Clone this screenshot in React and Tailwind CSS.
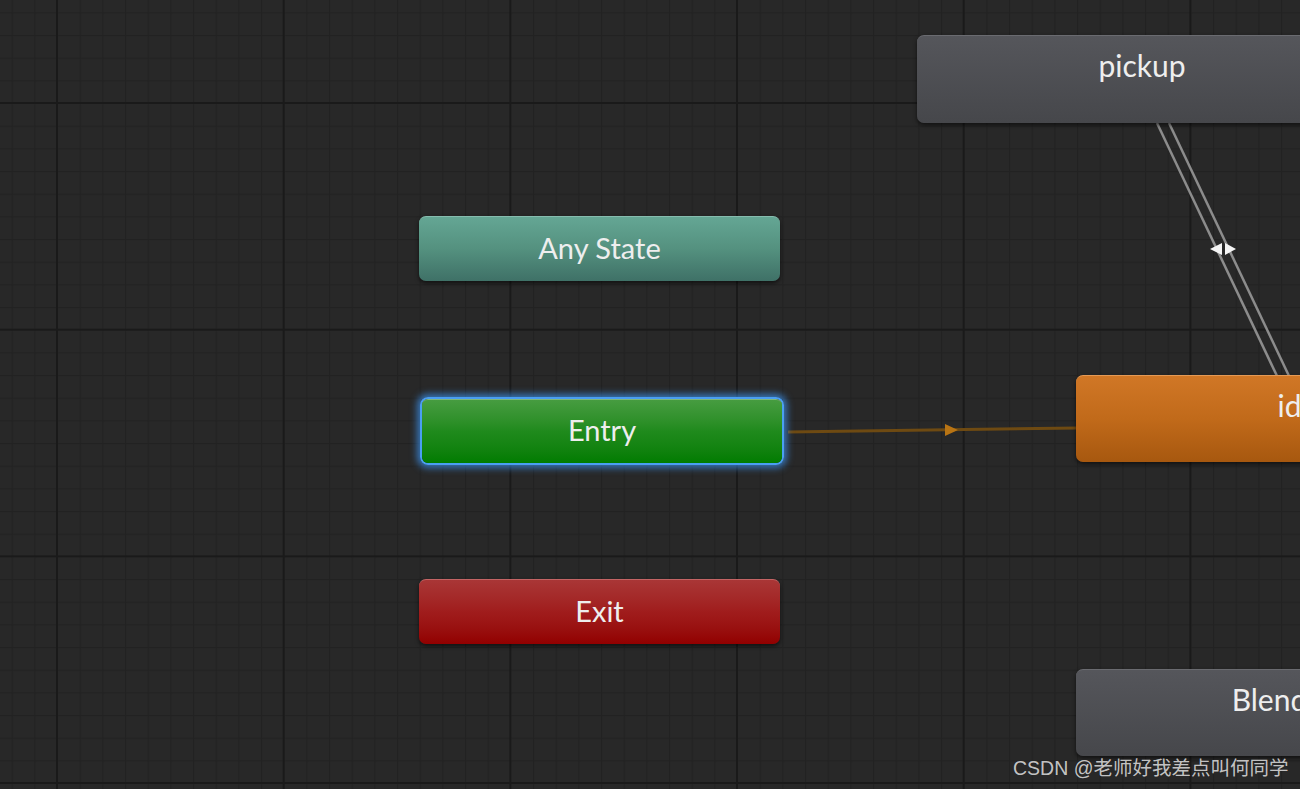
import React from "react"

const font = { fontFamily: "Lato, 'Noto Sans', sans-serif" }

const StateNode = ({ className, label, big }) => (
  <div
    className={
      "absolute flex justify-center text-[#eeeeee] rounded-[7px] shadow-[0_2px_4px_rgba(0,0,0,0.6)] " +
      (big ? "items-start pt-[12px] text-[30px] leading-[34px] " : "items-center pb-[4px] text-[29px] leading-none ") +
      className
    }
    style={font}
  >
    {label}
  </div>
)

const GridBackground = () => (
  <svg className="absolute inset-0" width="1300" height="789">
    <defs>
      <pattern id="minor" x="57" y="103" width="22.667" height="22.667" patternUnits="userSpaceOnUse">
        <rect x="0" y="0" width="1.2" height="22.667" fill="#222222" />
        <rect x="0" y="0" width="22.667" height="1.2" fill="#222222" />
      </pattern>
      <pattern id="major" x="56" y="102" width="226.667" height="226.667" patternUnits="userSpaceOnUse">
        <rect x="0" y="0" width="2" height="226.667" fill="#1a1a1a" />
        <rect x="0" y="0" width="226.667" height="2" fill="#1a1a1a" />
      </pattern>
    </defs>
    <rect width="1300" height="789" fill="#282828" />
    <rect width="1300" height="789" fill="url(#minor)" />
    <rect width="1300" height="789" fill="url(#major)" />
  </svg>
)

const Transitions = () => (
  <svg className="absolute inset-0 pointer-events-none" width="1300" height="789">
    {/* entry -> idle */}
    <line x1="788" y1="432" x2="1078" y2="428" stroke="#6e4a12" strokeWidth="3" />
    <polygon points="945,424 958,430 945,436" fill="#b87414" />
    {/* pickup <-> idle */}
    <line x1="1157" y1="123" x2="1277" y2="376" stroke="#8c8c8c" strokeWidth="2.5" />
    <line x1="1169" y1="123" x2="1289" y2="376" stroke="#8c8c8c" strokeWidth="2.5" />
    <polygon points="1210,249 1222,243 1222,255" fill="#f4f4f4" />
    <polygon points="1236,249 1225,243 1225,255" fill="#f4f4f4" />
  </svg>
)

export default function App() {
  return (
    <div className="relative w-[1300px] h-[789px] overflow-hidden bg-[#282828]">
      <GridBackground />
      <Transitions />

      <StateNode
        big
        label="pickup"
        className="left-[917px] top-[35px] w-[450px] h-[88px] bg-gradient-to-b from-[#55565b] to-[#46474b] border-t border-[#6a6b70]"
      />

      <StateNode
        label="Any State"
        className="left-[419px] top-[216px] w-[361px] h-[65px] bg-gradient-to-b from-[#64a694] via-[#54917f] to-[#3f7167] border-t border-[#86bcae]"
      />

      <div className="absolute left-[420px] top-[397px] w-[364px] h-[68px] rounded-[8px] border-2 border-[#4a9ef2] shadow-[0_0_7px_3px_rgba(59,143,232,0.75)]">
        <div
          className="w-full h-full rounded-[6px] flex items-center justify-center pb-[4px] text-[#eeeeee] text-[29px] leading-none bg-gradient-to-b from-[#469c40] via-[#1f8a1c] to-[#017c01] border-t border-[#7fb87a]"
          style={font}
        >
          Entry
        </div>
      </div>

      <StateNode
        label="Exit"
        className="left-[419px] top-[579px] w-[361px] h-[65px] bg-gradient-to-b from-[#a93636] via-[#a01c1c] to-[#920000] border-t border-[#c46464]"
      />

      <StateNode
        big
        label="idle"
        className="left-[1076px] top-[375px] w-[450px] h-[87px] bg-gradient-to-b from-[#d07726] via-[#c16a1a] to-[#a7580f] border-t border-[#e59a55]"
      />

      <StateNode
        big
        label="Blend Tree"
        className="left-[1076px] top-[669px] w-[450px] h-[87px] bg-gradient-to-b from-[#55565b] to-[#46474b] border-t border-[#6a6b70]"
      />

      <div
        className="absolute left-[1013px] top-[754px] text-[19.5px] leading-[28px] text-[#d8d8d8]/90"
        style={{ fontFamily: "'Liberation Sans', 'Noto Sans CJK SC', sans-serif" }}
      >
        CSDN @老师好我差点叫何同学
      </div>
    </div>
  )
}
